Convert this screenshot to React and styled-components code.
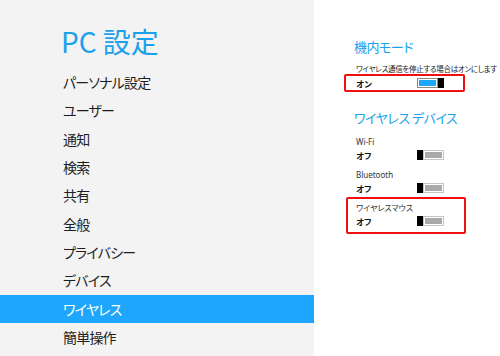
import React from "react";
import styled, { createGlobalStyle } from "styled-components";

const Global = createGlobalStyle`
  html, body { margin: 0; padding: 0; }
  body {
    width: 500px; height: 356px; overflow: hidden;
    font-family: "Noto Sans CJK JP", "Noto Sans", sans-serif;
    font-feature-settings: "palt";
  }
`;

const Page = styled.div`
  display: flex;
  width: 500px;
  height: 356px;
  background: #ffffff;
`;

const Sidebar = styled.nav`
  width: 314px;
  flex: none;
  background: #f3f3f3;
  padding-top: 23px;
  box-sizing: border-box;
`;

const Title = styled.h1`
  margin: 0 0 9px 0;
  padding-left: 61px;
  font-size: 28px;
  line-height: 36px;
  font-weight: 400;
  color: #1ba0ec;
  font-feature-settings: normal;
`;

const NavList = styled.ul`
  list-style: none;
  margin: 0;
  padding: 0;
`;

const NavItem = styled.li`
  height: 28.33px;
  display: flex;
  align-items: center;
  padding-left: 63px;
  font-size: 14px;
  letter-spacing: -0.8px;
  color: ${(p) => (p.$active ? "#ffffff" : "#1e1e1e")};
  background: ${(p) => (p.$active ? "#1ea6fc" : "transparent")};
`;

const Content = styled.main`
  flex: 1;
  min-width: 0;
  padding: 37px 0 0 42px;
  box-sizing: border-box;
`;

const SectionHeader = styled.h2`
  margin: ${(p) => p.$mt || 0}px 0 0 -2px;
  font-size: 13px;
  letter-spacing: -0.5px;
  line-height: 20px;
  font-weight: 400;
  color: #1ba0ec;
  white-space: nowrap;
`;

const Description = styled.p`
  margin: 6px 0 0 0;
  font-size: 7.5px;
  letter-spacing: -0.3px;
  line-height: 12px;
  color: #222;
  white-space: nowrap;
`;

const Setting = styled.div`
  position: relative;
  margin-top: ${(p) => p.$mt}px;
  width: 88px;
  &::after {
    content: "";
    display: ${(p) => (p.$marked ? "block" : "none")};
    position: absolute;
    top: ${(p) => p.$box.top}px;
    bottom: ${(p) => p.$box.bottom}px;
    left: ${(p) => p.$box.left}px;
    right: ${(p) => p.$box.right}px;
    border: 2px solid #f01010;
    border-radius: 2px;
    pointer-events: none;
  }
`;

const SettingLabel = styled.div`
  font-size: 8px;
  line-height: 12px;
  color: #333;
  font-family: "Segoe UI", "Noto Sans", "Noto Sans CJK JP", sans-serif;
  white-space: nowrap;
`;

const SettingRow = styled.div`
  display: grid;
  grid-template-columns: 61px 27px;
  align-items: center;
  height: 12px;
  margin-top: ${(p) => p.$mt || 0}px;
`;

const StateText = styled.span`
  font-size: 8.5px;
  font-weight: 700;
  color: #111;
  line-height: 12px;
`;

const Toggle = styled.span`
  display: flex;
  flex-direction: ${(p) => (p.$on ? "row-reverse" : "row")};
  width: 27px;
  height: 10px;
`;

const Thumb = styled.span`
  width: 6px;
  height: 10px;
  background: #000;
  flex: none;
`;

const Track = styled.span`
  flex: 1;
  box-sizing: border-box;
  border: 1px solid ${(p) => (p.$on ? "#8a8a8a" : "#c4c4c4")};
  padding: 1px;
  background: #fff;
  display: flex;
  &::before {
    content: "";
    flex: 1;
    background: ${(p) => (p.$on ? "#1ea6fc" : "#aaaaaa")};
  }
`;

function Switch({ on }) {
  return (
    <Toggle $on={on}>
      <Thumb />
      <Track $on={on} />
    </Toggle>
  );
}

const navItems = [
  "パーソナル設定",
  "ユーザー",
  "通知",
  "検索",
  "共有",
  "全般",
  "プライバシー",
  "デバイス",
  "ワイヤレス",
  "簡単操作",
];

const devices = [
  { label: "Wi-Fi", marked: false, mt: 8 },
  { label: "Bluetooth", marked: false, mt: 8 },
  { label: "ワイヤレスマウス", marked: true, mt: 8 },
];

export default function App() {
  return (
    <>
      <Global />
      <Page>
        <Sidebar>
          <Title>PC 設定</Title>
          <NavList>
            {navItems.map((n) => (
              <NavItem key={n} $active={n === "ワイヤレス"}>
                {n}
              </NavItem>
            ))}
          </NavList>
        </Sidebar>
        <Content>
          <SectionHeader>機内モード</SectionHeader>
          <Description>ワイヤレス通信を停止する場合はオンにします</Description>
          <Setting
            $mt={2}
            $marked
            $box={{ top: -3, bottom: -3, left: -12, right: -21 }}
          >
            <SettingRow>
              <StateText>オン</StateText>
              <Switch on />
            </SettingRow>
          </Setting>
          <SectionHeader $mt={19}>ワイヤレス デバイス</SectionHeader>
          {devices.map((d) => (
            <Setting
              key={d.label}
              $mt={d.mt}
              $marked={d.marked}
              $box={{ top: -5, bottom: -7, left: -10, right: -22 }}
            >
              <SettingLabel>{d.label}</SettingLabel>
              <SettingRow $mt={1}>
                <StateText>オフ</StateText>
                <Switch on={false} />
              </SettingRow>
            </Setting>
          ))}
        </Content>
      </Page>
    </>
  );
}
